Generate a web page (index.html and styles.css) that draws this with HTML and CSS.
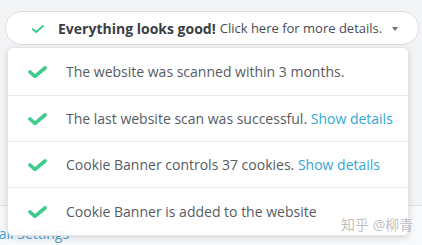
FILE: index.html
```html
<!DOCTYPE html>
<html>
<head>
<meta charset="utf-8">
<link rel="stylesheet" href="styles.css">
</head>
<body>
<div class="page">
  <div class="backdrop">
    <div class="backdrop-lower"><a class="bg-link">Email Settings</a></div>
  </div>
  <div class="status">
    <button class="pill">
      <svg class="pill-check" viewBox="0 0 12 8" width="12" height="8"><path d="M1 4.2 L4.3 7 L11 1" fill="none" stroke="#3ecb8c" stroke-width="2" stroke-linecap="round" stroke-linejoin="round"/></svg>
      <span class="pill-strong">Everything looks good!</span>
      <span class="pill-text">Click here for more details.</span>
      <span class="caret"></span>
    </button>
    <ul class="card">
      <li class="row">
        <svg class="check" viewBox="0 0 19 12" width="19" height="12"><path d="M2 6 L7 10.3 L17 2" fill="none" stroke="#3ecb8c" stroke-width="3.6" stroke-linecap="round" stroke-linejoin="round"/></svg>
        <span>The website was scanned within 3 months.</span>
      </li>
      <li class="row">
        <svg class="check" viewBox="0 0 19 12" width="19" height="12"><path d="M2 6 L7 10.3 L17 2" fill="none" stroke="#3ecb8c" stroke-width="3.6" stroke-linecap="round" stroke-linejoin="round"/></svg>
        <span>The last website scan was successful. <a class="link">Show details</a></span>
      </li>
      <li class="row">
        <svg class="check" viewBox="0 0 19 12" width="19" height="12"><path d="M2 6 L7 10.3 L17 2" fill="none" stroke="#3ecb8c" stroke-width="3.6" stroke-linecap="round" stroke-linejoin="round"/></svg>
        <span>Cookie Banner controls 37 cookies. <a class="link">Show details</a></span>
      </li>
      <li class="row">
        <svg class="check" viewBox="0 0 19 12" width="19" height="12"><path d="M2 6 L7 10.3 L17 2" fill="none" stroke="#3ecb8c" stroke-width="3.6" stroke-linecap="round" stroke-linejoin="round"/></svg>
        <span>Cookie Banner is added to the website</span>
      </li>
    </ul>
  </div>
  <div class="watermark">知乎 @柳青</div>
</div>
</body>
</html>
```
FILE: styles.css
```css
* { box-sizing: border-box; }
html, body { margin: 0; padding: 0; }
body {
  width: 422px;
  height: 245px;
  overflow: hidden;
  background: #f3f4f6;
  font-family: "Open Sans", "Noto Sans", "Noto Sans CJK SC", sans-serif;
}
.page {
  position: relative;
  width: 422px;
  height: 245px;
}
.backdrop {
  position: absolute;
  left: 0;
  top: 0;
  width: 422px;
  height: 245px;
  display: flex;
  flex-direction: column;
  justify-content: flex-end;
}
.backdrop-lower {
  height: 40px;
  background: #f8f9fa;
  border-top: 1px solid #dde1e5;
  padding-top: 19px;
}
.bg-link {
  display: block;
  color: #45a2d2;
  font-size: 14px;
  margin-left: -22px;
  line-height: 18px;
}
.status {
  position: relative;
  padding-top: 11px;
}
.pill {
  display: flex;
  align-items: center;
  width: 414px;
  height: 34px;
  margin-left: 5px;
  padding: 0 0 0 26px;
  border: 1px solid #dadde1;
  border-radius: 17px;
  background: #ffffff;
  font-family: inherit;
  cursor: pointer;
}
.pill-check { flex: none; margin-right: 14px; margin-top: 1px; }
.pill-strong {
  font-weight: 700;
  font-size: 14px;
  color: #3a3f45;
  margin-right: 4px;
}
.pill-text {
  font-size: 13px;
  color: #474c52;
}
.caret {
  width: 0;
  height: 0;
  margin-left: 10px;
  margin-top: 2px;
  border-left: 3.5px solid transparent;
  border-right: 3.5px solid transparent;
  border-top: 4px solid #6b7075;
}
.card {
  list-style: none;
  margin: 2px 0 0 7px;
  padding: 0;
  width: 402px;
  background: rgba(255, 255, 255, 0.93);
  border: 1px solid #e2e4e7;
  border-radius: 6px;
  box-shadow: 0 2px 6px rgba(0, 0, 0, 0.14);
}
.row {
  display: flex;
  align-items: center;
  height: 46px;
  padding-left: 20px;
  border-bottom: 1px solid #e9eaec;
  font-size: 14px;
  color: #575c62;
}
.row:first-child { height: 48px; }
.row:last-child { border-bottom: none; height: 47px; }
.check { flex: none; margin-right: 19px; margin-top: 1px; }
.link { color: #33a6d4; }
.watermark {
  position: absolute;
  left: 341px;
  top: 216px;
  font-size: 14px;
  line-height: 18px;
  color: rgba(175, 175, 175, 0.8);
  white-space: nowrap;
}
```
